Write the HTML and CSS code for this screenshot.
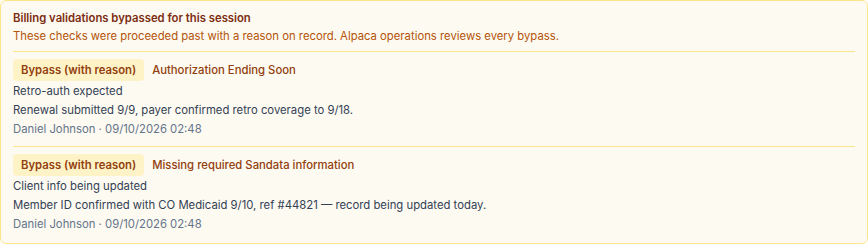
FILE: index.html
```html
<!DOCTYPE html>
<html lang="en">
<head>
  <meta charset="UTF-8">
  <meta name="viewport" content="width=device-width, initial-scale=1.0">
  <title>Billing bypasses</title>
  <link rel="stylesheet" href="styles.css">
</head>
<body>
  <div class="bypass-card">
    <div class="bypass-header">
      <div class="bypass-title">Billing validations bypassed for this session</div>
      <div class="bypass-subtitle">These checks were proceeded past with a reason on record. Alpaca operations reviews every bypass.</div>
    </div>

    <div class="bypass-item">
      <div class="item-head">
        <span class="badge">Bypass (with reason)</span>
        <span class="item-name">Authorization Ending Soon</span>
      </div>
      <div class="item-reason">Retro-auth expected</div>
      <div class="item-note">Renewal submitted 9/9, payer confirmed retro coverage to 9/18.</div>
      <div class="item-meta">Daniel Johnson · 09/10/2026 02:48</div>
    </div>

    <div class="bypass-item">
      <div class="item-head">
        <span class="badge">Bypass (with reason)</span>
        <span class="item-name">Missing required Sandata information</span>
      </div>
      <div class="item-reason">Client info being updated</div>
      <div class="item-note">Member ID confirmed with CO Medicaid 9/10, ref #44821 — record being updated today.</div>
      <div class="item-meta">Daniel Johnson · 09/10/2026 02:48</div>
    </div>
  </div>
</body>
</html>
```

FILE: styles.css
```css
body {
  margin: 0;
  font-family: Inter, "Noto Sans", sans-serif;
  font-size: 11.3px;
  background: #ffffff;
}

.bypass-card {
  box-sizing: border-box;
  height: 244px;
  padding: 8px 12px 10px;
  background: #fdfaf1;
  border: 1px solid #fde68a;
  border-radius: 6px;
}

.bypass-header {
  line-height: 18px;
  padding-bottom: 6px;
}

.bypass-title {
  font-weight: 600;
  color: #7c2d12;
}

.bypass-subtitle {
  color: #b45309;
}

.bypass-item {
  border-top: 1px solid #fde68a;
  padding: 7px 0 7px;
}

.bypass-item:last-child {
  padding-bottom: 0;
}

.item-head {
  display: flex;
  align-items: center;
  gap: 8px;
  margin-bottom: 1px;
}

.badge {
  height: 22px;
  line-height: 22px;
  padding: 0 8px;
  border-radius: 4px;
  background: #fef3c7;
  color: #92400e;
  font-weight: 600;
}

.item-name {
  color: #92400e;
  font-weight: 500;
}

.item-reason,
.item-note,
.item-meta {
  line-height: 19px;
}

.item-reason,
.item-note {
  color: #334155;
}

.item-meta {
  color: #64748b;
}
```
